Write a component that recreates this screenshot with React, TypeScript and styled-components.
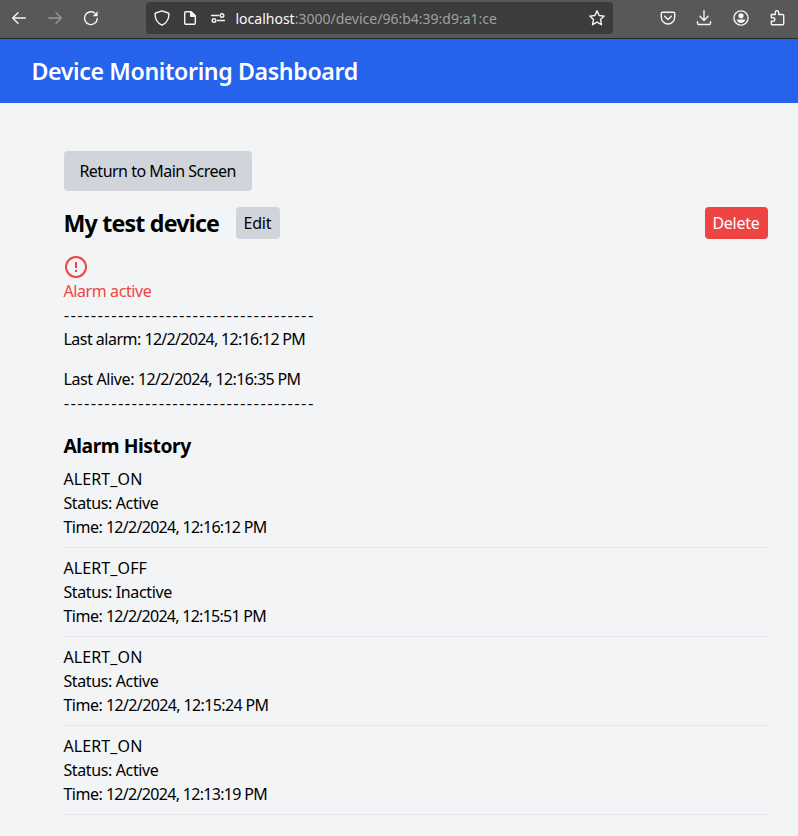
import React from "react";
import styled, { createGlobalStyle } from "styled-components";

const GlobalStyle = createGlobalStyle`
  * { box-sizing: border-box; }
  body {
    margin: 0;
    background: #f3f4f6;
    color: #000;
    font-family: "Noto Sans", sans-serif;
    font-size: 16px;
    line-height: 24px;
  }
  h1, h2, h3, p, ul { margin: 0; padding: 0; }
`;

const BrowserBar = styled.div`
  display: flex;
  align-items: center;
  height: 39px;
  padding: 0 13px 2px 11px;
  background: #585858;
  border-bottom: 1px solid #24262c;
`;

const NavGroup = styled.div`
  display: flex;
  gap: 20px;
  width: 135px;
`;

const UrlBar = styled.div`
  display: flex;
  align-items: center;
  width: 467px;
  height: 32px;
  border-radius: 4px;
  padding: 0 8px;
  background: #3c3c3c;
`;

const SiteIcons = styled.div`
  display: flex;
  gap: 12px;
  margin-right: 9.5px;
`;

const Url = styled.div`
  flex: 1;
  padding-top: 2px;
  color: #a0a0a0;
  font-size: 14px;
  line-height: 20px;
  white-space: nowrap;
`;

const Host = styled.span`
  color: #fbfbfe;
`;

const Tools = styled.div`
  display: flex;
  gap: 20.3px;
  margin-left: auto;
`;

const Glyph = styled.svg<{ $dim?: boolean }>`
  display: block;
  width: 16px;
  height: 16px;
  fill: none;
  stroke: ${(p) => (p.$dim ? "#969696" : "#f4f4f6")};
  stroke-width: 1.4;
  stroke-linecap: round;
  stroke-linejoin: round;
`;

const Header = styled.header`
  height: 64px;
  padding: 16px 32px;
  background: #2563eb;
  color: #fff;
`;

const Title = styled.h1`
  font-size: 23.2px;
  font-weight: 600;
  line-height: 33px;
  letter-spacing: -0.38px;
  text-indent: -0.6px;
  white-space: nowrap;
`;

const Main = styled.main`
  padding: 48px 30px 0 64px;
  text-indent: -0.6px;
`;

const Button = styled.button<{ $variant?: "danger"; $width: number; $large?: boolean; $tracking: number }>`
  display: flex;
  justify-content: flex-start;
  align-items: center;
  width: ${(p) => p.$width}px;
  height: ${(p) => (p.$large ? 40 : 32)}px;
  padding: 0 ${(p) => (p.$large ? 16 : 8)}px;
  border: 0;
  border-radius: 4px;
  background: ${(p) => (p.$variant === "danger" ? "#ef4444" : "#d1d5db")};
  color: ${(p) => (p.$variant === "danger" ? "#fff" : "#000")};
  font: inherit;
  letter-spacing: ${(p) => p.$tracking}px;
  text-indent: -0.6px;
  white-space: nowrap;
`;

const DeviceRow = styled.div`
  display: flex;
  align-items: center;
  justify-content: space-between;
  margin: 16px 0;
`;

const DeviceName = styled.div`
  display: flex;
  align-items: center;
`;

const Name = styled.h2`
  width: 172px;
  font-size: 23.2px;
  font-weight: 700;
  line-height: 32px;
  letter-spacing: -0.79px;
  white-space: nowrap;
`;

const AlarmState = styled.div`
  color: #ef4444;
  letter-spacing: -0.4px;
`;

const AlarmIcon = styled.svg`
  display: block;
  width: 24px;
  height: 24px;
  fill: none;
  stroke: currentColor;
  stroke-width: 2;
`;

const Rule = styled.p`
  height: 24px;
  font-family: Lato, sans-serif;
  letter-spacing: 0.84px;
  white-space: nowrap;
`;

const Fact = styled.p<{ $spaced?: boolean }>`
  margin-top: ${(p) => (p.$spaced ? 16 : 0)}px;
`;

const Run = styled.span<{ $tracking: number }>`
  letter-spacing: ${(p) => p.$tracking}px;
`;

const HistoryTitle = styled.h3`
  height: 28px;
  margin-top: 16px;
  font-size: 19.3px;
  font-weight: 700;
  line-height: 30px;
  letter-spacing: -0.46px;
`;

const History = styled.ul`
  list-style: none;
`;

const Entry = styled.li`
  padding: 8px 0;
  border-bottom: 1px solid #e5e7eb;
`;

type Alarm = { type: string; status: string; time: string; tracking: number };

const alarms: Alarm[] = [
  { type: "ALERT_ON", status: "Active", time: "12/2/2024, 12:16:12 PM", tracking: -0.71 },
  { type: "ALERT_OFF", status: "Inactive", time: "12/2/2024, 12:15:51 PM", tracking: -0.73 },
  { type: "ALERT_ON", status: "Active", time: "12/2/2024, 12:15:24 PM", tracking: -0.62 },
  { type: "ALERT_ON", status: "Active", time: "12/2/2024, 12:13:19 PM", tracking: -0.69 },
];

const dashes = "-".repeat(37);

export default function App() {
  return (
    <>
      <GlobalStyle />
      <BrowserBar>
        <NavGroup>
          <Glyph viewBox="0 0 16 16"><path d="M14.3 8H1.8M7 2.7 1.7 8 7 13.3" /></Glyph>
          <Glyph viewBox="0 0 16 16" $dim><path d="M1.7 8h12.5M9 2.7 14.3 8 9 13.3" /></Glyph>
          <Glyph viewBox="0 0 16 16">
            <path d="M14.3 8.5A6.4 6.4 0 1 1 11.7 3" />
            <path d="M14.6 1.3v5H9.6z" fill="#f4f4f6" stroke="none" />
          </Glyph>
        </NavGroup>
        <UrlBar>
          <SiteIcons>
            <Glyph viewBox="0 0 16 16">
              <path d="M8 .8 14.2 3c.5.2.8.5.8 1C14.8 9.5 12.5 13.2 8 15.2 3.5 13.2 1.2 9.5 1 4c0-.5.3-.8.8-1z" />
            </Glyph>
            <Glyph viewBox="0 0 16 16">
              <path d="M3.7 1.7h5.6l4 4v7.6a1 1 0 0 1-1 1H3.7a1 1 0 0 1-1-1V2.7a1 1 0 0 1 1-1z" />
              <path d="M8.7 1.7v4.6h4.6z" fill="#f4f4f6" />
            </Glyph>
            <Glyph viewBox="0 0 16 16">
              <path d="M1.5 5.500h7M7.500 10.500h7" />
              <circle cx="12" cy="5.500" r="1.800" />
              <circle cx="4" cy="10.500" r="1.800" />
            </Glyph>
          </SiteIcons>
          <Url><Host>localhost</Host>:3000/device/96:b4:39:d9:a1:ce</Url>
          <Glyph viewBox="0 0 16 16">
            <path d="M8 .9 10.1 5.5l5.1.6-3.7 3.5 1 5.1L8 12.2l-4.5 2.5 1-5.1L.8 6.1l5.1-.6z" />
          </Glyph>
        </UrlBar>
        <Tools>
          <Glyph viewBox="0 0 16 16">
            <path d="M2.5 2.2h11a1.2 1.2 0 0 1 1.2 1.2V7.3a6.7 6.7 0 0 1-13.4 0V3.400a1.2 1.2 0 0 1 1.2-1.2z" />
            <path d="M4.6 6.2 8 9.4l3.4-3.2" />
          </Glyph>
          <Glyph viewBox="0 0 16 16">
            <path d="M8 .8v9.4M3.9 6.3 8 10.4l4.1-4.1M1.5 11.8v1.5a1.2 1.2 0 0 0 1.2 1.2h10.6a1.2 1.2 0 0 0 1.2-1.2v-1.5" />
          </Glyph>
          <Glyph viewBox="0 0 16 16">
            <circle cx="8" cy="8" r="7.1" />
            <circle cx="8" cy="5.8" r="2.6" fill="#f4f4f6" stroke="none" />
            <path d="M3.8 9.5h8.4c-.3 2.100-2 3.400-4.200 3.400s-3.900-1.300-4.200-3.400z" fill="#f4f4f6" stroke="none" />
          </Glyph>
          <Glyph viewBox="0 0 16 16">
            <path d="M2.300 4.500h4V2.500a1.700 1.700 0 0 1 3.400 0v2h4a1 1 0 0 1 1 1v8.200a1 1 0 0 1-1 1H3.300a1 1 0 0 1-1-1v-2.500h1.900a1.700 1.700 0 0 0 0-3.400H2.300z" />
          </Glyph>
        </Tools>
      </BrowserBar>

      <Header><Title>Device Monitoring Dashboard</Title></Header>

      <Main>
        <Button $width={188} $large $tracking={-0.51}>Return to Main Screen</Button>
        <DeviceRow>
          <DeviceName>
            <Name>My test device</Name>
            <Button $width={44} $tracking={-0.16}>Edit</Button>
          </DeviceName>
          <Button $variant="danger" $width={63} $tracking={-0.28}>Delete</Button>
        </DeviceRow>

        <AlarmState>
          <AlarmIcon viewBox="0 0 24 24">
            <circle cx="12" cy="12" r="10" />
            <path d="M12 7v6M12 15v2" />
          </AlarmIcon>
          <p>Alarm active</p>
        </AlarmState>
        <Rule>{dashes}</Rule>
        <Fact>
          <Run $tracking={-0.5}>Last alarm: </Run>
          <Run $tracking={-0.71}>12/2/2024, 12:16:12 PM</Run>
        </Fact>
        <Fact $spaced>
          <Run $tracking={-0.38}>Last Alive: </Run>
          <Run $tracking={-0.62}>12/2/2024, 12:16:35 PM</Run>
        </Fact>
        <Rule>{dashes}</Rule>

        <HistoryTitle>Alarm History</HistoryTitle>
        <History>
          {alarms.map((a) => (
            <Entry key={a.time}>
              <p><Run $tracking={0.11}>{a.type}</Run></p>
              <p><Run $tracking={-0.37}>Status: {a.status}</Run></p>
              <p>
                <Run $tracking={-0.5}>Time: </Run>
                <Run $tracking={a.tracking}>{a.time}</Run>
              </p>
            </Entry>
          ))}
        </History>
      </Main>
    </>
  );
}
